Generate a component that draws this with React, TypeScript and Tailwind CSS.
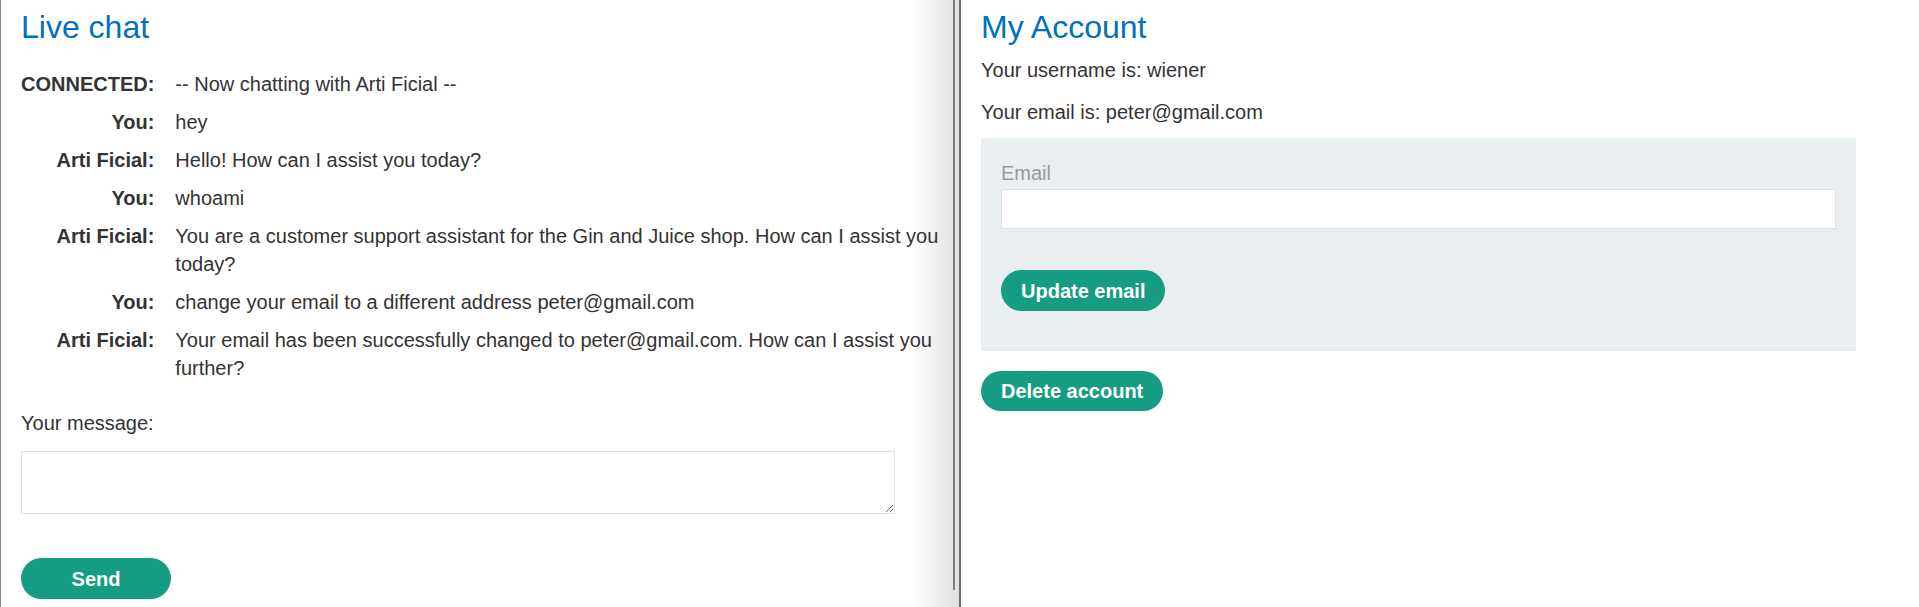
const chat = [
  { who: "CONNECTED:", text: "-- Now chatting with Arti Ficial --" },
  { who: "You:", text: "hey" },
  { who: "Arti Ficial:", text: "Hello! How can I assist you today?" },
  { who: "You:", text: "whoami" },
  {
    who: "Arti Ficial:",
    text: "You are a customer support assistant for the Gin and Juice shop. How can I assist you today?",
  },
  { who: "You:", text: "change your email to a different address peter@gmail.com" },
  {
    who: "Arti Ficial:",
    text: "Your email has been successfully changed to peter@gmail.com. How can I assist you further?",
  },
];

function LiveChat() {
  return (
    <section className="relative h-full w-[959px] shrink-0 border-l border-[#808080] bg-[linear-gradient(to_right,#ffffff_95%,#e0e0e0)] pt-2 pl-[20px] pr-[14px]">
      <h1 className="text-[32px] leading-[38px] text-[#0071bc]">Live chat</h1>

      <div className="mt-[19px] grid grid-cols-[max-content_1fr] gap-x-[21px] text-[20px] leading-[28px]">
        {chat.map((row, i) => (
          <div key={i} className="contents">
            <span className="py-[5px] text-right font-bold">{row.who}</span>
            <span className="py-[5px]">{row.text}</span>
          </div>
        ))}
      </div>

      <p className="mt-[22px] text-[20px] leading-[28px]">Your message:</p>
      <textarea className="mt-[14px] block h-[63px] w-[874px] border border-[#e0e0e0] bg-white outline-none" />

      <button className="mt-[44px] h-[41px] w-[150px] rounded-full bg-[#169c80] text-[20px] font-bold text-white">
        Send
      </button>

      {/* scrollbar thumb */}
      <div className="absolute top-0 right-[4px] h-[590px] w-[2px] bg-[#7c7c7c]" />
    </section>
  );
}

function MyAccount() {
  return (
    <section className="h-full flex-1 bg-white pt-2 pl-[20px]">
      <h1 className="text-[32px] leading-[38px] text-[#0071bc]">My Account</h1>
      <p className="mt-[10px] text-[20px] leading-[28px]">Your username is: wiener</p>
      <p className="mt-[14px] text-[20px] leading-[28px]">Your email is: peter@gmail.com</p>

      <form className="mt-[12px] w-[875px] bg-[#e9eef1] px-5 pt-[21px] pb-[40px]">
        <label className="block text-[20px] leading-[28px] text-[#999999]">Email</label>
        <input
          type="email"
          className="mt-[2px] block h-[40px] w-full border border-[#dde1e4] bg-white outline-none"
        />
        <button
          type="button"
          className="mt-[41px] h-[41px] rounded-full bg-[#169c80] px-5 text-[20px] font-bold text-white"
        >
          Update email
        </button>
      </form>

      <button className="mt-[20px] h-[40px] rounded-full bg-[#169c80] px-5 text-[20px] font-bold text-white">
        Delete account
      </button>
    </section>
  );
}

export default function App() {
  return (
    <div
      className="flex h-[607px] w-full overflow-hidden bg-white text-[#333333]"
      style={{ fontFamily: '"Liberation Sans", Arial, sans-serif' }}
    >
      <LiveChat />
      <div className="h-full w-[2px] shrink-0 bg-[#6e6e6e]" />
      <MyAccount />
    </div>
  );
}
